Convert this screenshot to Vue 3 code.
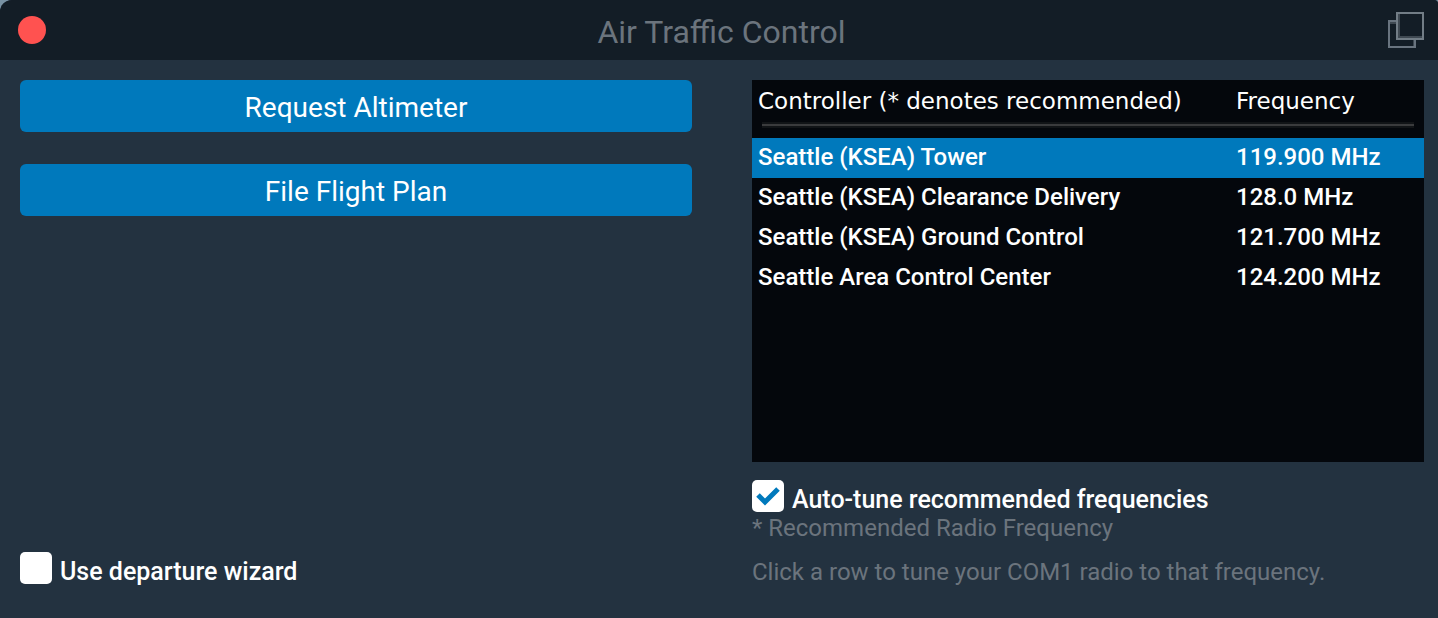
<script setup>
import { ref } from 'vue'

const stations = [
  { name: 'Seattle (KSEA) Tower', frequency: '119.900 MHz' },
  { name: 'Seattle (KSEA) Clearance Delivery', frequency: '128.0 MHz' },
  { name: 'Seattle (KSEA) Ground Control', frequency: '121.700 MHz' },
  { name: 'Seattle Area Control Center', frequency: '124.200 MHz' }
]
const tuned = ref(0)
const autoTune = ref(true)
const wizard = ref(false)
</script>

<template>
  <main class="window">
    <header class="titlebar">
      <button class="close" type="button" aria-label="Close"></button>
      <h1>Air Traffic Control</h1>
      <button class="popout" type="button" aria-label="Pop out">
        <svg width="38" height="38" viewBox="0 0 38 38" fill="none" stroke-width="2">
          <path stroke="#3f4952" d="M3 12h6M27 29v6M12 3v24M11 26h24" />
          <path stroke="#69747f" d="M9 10H2v26h26v-7" />
          <rect stroke="#727d86" x="10" y="2" width="26" height="26" />
        </svg>
      </button>
    </header>
    <div class="body">
      <section class="actions">
        <button class="action" type="button">Request Altimeter</button>
        <button class="action" type="button">File Flight Plan</button>
        <label class="check wizard"><input v-model="wizard" type="checkbox" /><span>Use departure wizard</span></label>
      </section>
      <section class="radio">
        <div class="list">
          <table>
            <thead>
              <tr><th>Controller (* denotes recommended)</th><th class="freq">Frequency</th></tr>
            </thead>
            <tbody>
              <tr v-for="(s, i) in stations" :key="s.name" :class="{ tuned: i === tuned }" @click="tuned = i">
                <td>{{ s.name }}</td><td>{{ s.frequency }}</td>
              </tr>
            </tbody>
          </table>
        </div>
        <label class="check"><input v-model="autoTune" type="checkbox" /><span>Auto-tune recommended frequencies</span>
          <svg v-if="autoTune" class="tick" width="32" height="32" viewBox="0 0 32 32" fill="none" stroke="#0079bc" stroke-width="5"><path d="M6 15l7 7L26 9" /></svg>
        </label>
        <p class="legend">* Recommended Radio Frequency</p>
        <p class="hint">Click a row to tune your COM1 radio to that frequency.</p>
      </section>
    </div>
  </main>
</template>

<style>
body { margin: 0; background: #7891a2; }
</style>

<style scoped>
* { box-sizing: border-box; }
.window {
  min-height: 100vh;
  display: flex;
  flex-direction: column;
  overflow: hidden;
  border-radius: 12px 4px 0 0;
  background: #233240;
  color: #fff;
  font-family: Roboto, "Liberation Sans", sans-serif;
}
button { border: 0; padding: 0; font-family: inherit; cursor: pointer; }
.titlebar {
  height: 60px;
  padding: 0 13px 0 18px;
  display: grid;
  grid-template-columns: 38px 1fr 38px;
  align-items: center;
  background: #131d26;
}
.close { width: 28px; height: 28px; border-radius: 50%; background: #ff5250; }
h1 { margin: 4px 0 0; text-align: center; font-size: 32px; line-height: 40px; font-weight: 400; color: #6b747d; }
.popout { height: 38px; background: none; }
.popout svg { display: block; }
.body {
  flex: 1;
  display: grid;
  grid-template-columns: 1fr 1fr;
  column-gap: 60px;
  padding: 20px 14px 30px 20px;
}
.actions { display: flex; flex-direction: column; }
.action {
  height: 52px;
  margin-bottom: 32px;
  padding-top: 2px;
  border-radius: 6px;
  background: #0079bc;
  color: #fff;
  font-size: 28px;
}
.radio { display: flex; flex-direction: column; }
.list { position: relative; flex: 1; background: #04070c; margin-bottom: 18px; }
.list::before {
  content: "";
  position: absolute;
  left: 10px;
  right: 10px;
  top: 42px;
  height: 2px;
  border: solid #111417;
  border-width: 2px 0;
  background: #3a3b3d;
}
table { width: 100%; border-collapse: collapse; table-layout: fixed; }
th, td { padding: 0 6px; text-align: left; white-space: nowrap; }
th { height: 58px; padding-bottom: 16px; font: 400 23px "DejaVu Sans", sans-serif; }
.freq { width: 194px; }
td { height: 40px; padding-bottom: 2px; font-size: 24px; line-height: 38px; font-weight: 500; }
.tuned { background: #0079bc; }
.check { position: relative; display: flex; gap: 8px; height: 32px; font-size: 25px; line-height: 40px; font-weight: 500; }
.check input { appearance: none; flex: none; width: 32px; height: 32px; margin: 0; border-radius: 5px; background: #fff; }
.tick { position: absolute; left: 0; top: 0; pointer-events: none; }
.wizard { margin-top: auto; margin-bottom: 4px; }
p { margin: 0; font-size: 24px; line-height: 32px; color: #6b747d; }
.hint { margin-top: 12px; }
</style>
